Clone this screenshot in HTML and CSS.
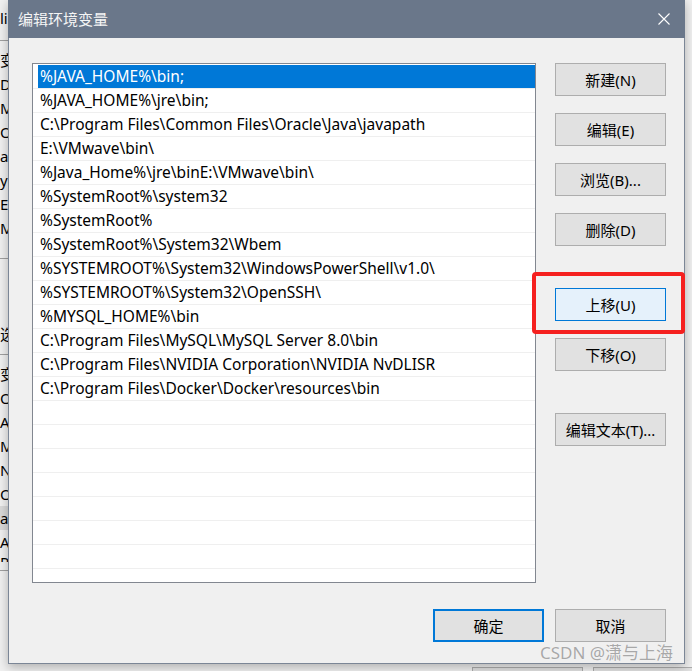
FILE: index.html
```html
<!DOCTYPE html>
<html lang="zh-CN">
<head>
<meta charset="utf-8">
<title>编辑环境变量</title>
<link rel="stylesheet" href="styles.css">
</head>
<body>
<div class="desktop">
  <div class="bgwin">
    <div class="bgcol">
      <div class="bgrow first">li</div>
      <div class="bgline"></div>
      <div class="bgrow cjk">变</div>
      <div class="bgrow">De</div>
      <div class="bgrow">Mc</div>
      <div class="bgrow">Or</div>
      <div class="bgrow">a</div>
      <div class="bgrow">y</div>
      <div class="bgrow">E</div>
      <div class="bgrow">M</div>
      <div class="bgspace1"></div>
      <div class="bgline"></div>
      <div class="bgspace2"></div>
      <div class="bgrow cjk">选</div>
      <div class="bgline"></div>
      <div class="bgrow cjk">变</div>
      <div class="bgrow">Or</div>
      <div class="bgrow">A</div>
      <div class="bgrow">MY</div>
      <div class="bgrow">NU</div>
      <div class="bgrow">OS</div>
      <div class="bgrow shaded">a</div>
      <div class="bgrow">A</div>
      <div class="bgrow cut">P</div>
      <div class="bgline"></div>
    </div>
    <div class="bgbuttons">
      <div class="bgbtn"></div>
      <div class="bgbtn"></div>
    </div>
  </div>

  <div class="dialog">
    <div class="titlebar">
      <span class="title">编辑环境变量</span>
      <svg class="close" width="12" height="12" viewBox="0 0 12 12">
        <path d="M0.5 0.5 L11.5 11.5 M11.5 0.5 L0.5 11.5" stroke="#ffffff" stroke-width="1.1" fill="none"/>
      </svg>
    </div>
    <div class="body">
      <div class="main">
        <div class="list">
          <div class="row selected"><span class="label">%JAVA_HOME%\bin;</span></div>
          <div class="row"><span class="label">%JAVA_HOME%\jre\bin;</span></div>
          <div class="row"><span class="label">C:\Program Files\Common Files\Oracle\Java\javapath</span></div>
          <div class="row"><span class="label">E:\VMwave\bin\</span></div>
          <div class="row"><span class="label">%Java_Home%\jre\binE:\VMwave\bin\</span></div>
          <div class="row"><span class="label">%SystemRoot%\system32</span></div>
          <div class="row"><span class="label">%SystemRoot%</span></div>
          <div class="row"><span class="label">%SystemRoot%\System32\Wbem</span></div>
          <div class="row"><span class="label">%SYSTEMROOT%\System32\WindowsPowerShell\v1.0\</span></div>
          <div class="row"><span class="label">%SYSTEMROOT%\System32\OpenSSH\</span></div>
          <div class="row"><span class="label">%MYSQL_HOME%\bin</span></div>
          <div class="row"><span class="label">C:\Program Files\MySQL\MySQL Server 8.0\bin</span></div>
          <div class="row"><span class="label">C:\Program Files\NVIDIA Corporation\NVIDIA NvDLISR</span></div>
          <div class="row"><span class="label">C:\Program Files\Docker\Docker\resources\bin</span></div>
          <div class="row"></div>
          <div class="row"></div>
          <div class="row"></div>
          <div class="row"></div>
          <div class="row"></div>
          <div class="row"></div>
          <div class="row"></div>
          <div class="row"></div>
          <div class="row"></div>
        </div>
        <div class="side">
          <div class="btn">新建(N)</div>
          <div class="btn">编辑(E)</div>
          <div class="btn">浏览(B)...</div>
          <div class="btn">删除(D)</div>
          <div class="btn group hot">上移(U)</div>
          <div class="btn">下移(O)</div>
          <div class="btn group">编辑文本(T)...</div>
        </div>
      </div>
      <div class="footer">
        <div class="btn default">确定</div>
        <div class="btn">取消</div>
      </div>
    </div>
  </div>

  <div class="redbox"></div>
  <div class="watermark">CSDN @潇与上海</div>
</div>
</body>
</html>
```
FILE: styles.css
```css
* {
  box-sizing: border-box;
}

html, body {
  margin: 0;
  padding: 0;
}

body {
  font-family: "Noto Sans", "Noto Sans CJK SC", sans-serif;
  font-size: 15px;
  color: #000;
  background: #f0f0f0;
}

.desktop {
  position: relative;
  width: 692px;
  height: 671px;
  overflow: hidden;
  background: #f0f0f0;
}

/* background window peeking out */
.bgwin {
  position: absolute;
  inset: 0;
  background: #f0f0f0;
}

.bgcol {
  display: flex;
  flex-direction: column;
  width: 60px;
  padding-top: 6px;
}

.bgrow {
  height: 24px;
  line-height: 24px;
  white-space: nowrap;
  font-size: 15px;
}

.bgrow.cjk {
  padding-left: 0;
}

.bgrow.shaded {
  background: #d9d9d9;
}

.bgrow.cut {
  height: 8px;
  overflow: hidden;
  line-height: 16px;
}

.bgrow.first {
  height: 26px;
}

.bgline {
  height: 1px;
  background: #a0a0a0;
  margin: 8px 0 7px;
}

.bgspace1 {
  height: 10px;
}

.bgspace2 {
  height: 56px;
}

.bgbuttons {
  position: absolute;
  left: 472px;
  top: 667px;
  display: flex;
  gap: 10px;
}

.bgbtn {
  width: 111px;
  height: 20px;
  border: 1px solid #adadad;
  background: #e1e1e1;
}

/* dialog */
.dialog {
  position: absolute;
  left: 8px;
  top: 0;
  width: 677px;
  height: 664px;
  background: #f0f0f0;
  border: 1px solid #7b8696;
  border-top: none;
  box-shadow: 0 3px 10px rgba(0, 0, 0, 0.28);
  display: flex;
  flex-direction: column;
}

.titlebar {
  height: 38px;
  margin: 0 -1px;
  background: #6a778a;
  display: flex;
  align-items: center;
  justify-content: space-between;
  padding: 0 15px 0 10px;
  flex: none;
}

.title {
  color: #f5f5f5;
  font-size: 15px;
  font-family: "Noto Sans CJK SC", sans-serif;
  line-height: 20px;
}

.close {
  display: block;
}

.body {
  flex: 1;
  padding: 25px 18px 21px 23px;
  display: flex;
  flex-direction: column;
}

.main {
  display: flex;
  gap: 19px;
  align-items: flex-start;
}

.list {
  width: 504px;
  height: 520px;
  border: 1px solid #828790;
  background: #fff;
  padding-top: 1px;
  overflow: hidden;
  flex: none;
}

.row {
  height: 24px;
  border-bottom: 1px solid #efefef;
  display: flex;
}

.label {
  flex: 1;
  margin-left: 5px;
  padding-left: 2px;
  line-height: 23px;
  font-size: 15.5px;
  white-space: nowrap;
}

.row.selected .label {
  background: #0078d7;
  color: #fff;
}

.side {
  display: flex;
  flex-direction: column;
  gap: 17px;
  width: 111px;
  flex: none;
}

.btn {
  width: 111px;
  height: 33px;
  border: 1px solid #adadad;
  background: #e1e1e1;
  display: flex;
  align-items: center;
  justify-content: center;
  font-size: 15px;
  white-space: nowrap;
}

.side .group {
  margin-top: 25px;
}

.btn.hot {
  border-color: #0078d7;
  background: #e5f1fb;
}

.btn.default {
  border: 2px solid #0078d7;
}

.footer {
  margin-top: 26px;
  display: flex;
  justify-content: flex-end;
  gap: 11px;
}

/* annotation overlays */
.redbox {
  position: absolute;
  left: 532px;
  top: 272px;
  width: 153px;
  height: 62px;
  border: 4px solid #f5201f;
  border-radius: 4px;
}

.watermark {
  position: absolute;
  left: 540px;
  top: 643px;
  font-size: 17px;
  line-height: 20px;
  color: #a8a8a8;
  text-shadow: 0 0 1px #ffffff;
  white-space: nowrap;
}
```
